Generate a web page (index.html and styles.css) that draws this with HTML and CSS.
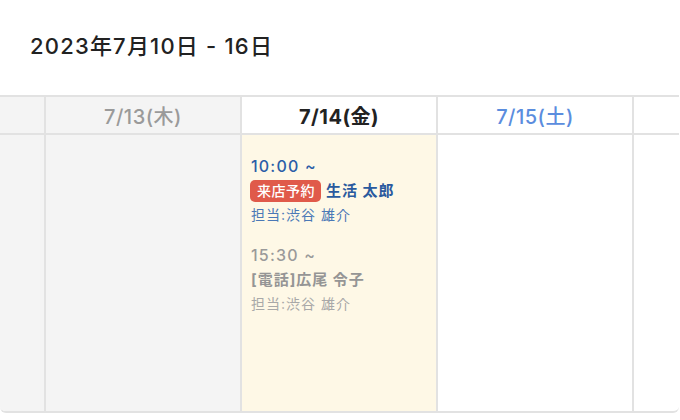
FILE: index.html
```html
<!DOCTYPE html>
<html lang="ja">
<head>
<meta charset="utf-8">
<link rel="stylesheet" href="styles.css">
</head>
<body>
<div class="page">
  <div class="title-bar"><h1 class="title">2023年7月10日 - 16日</h1></div>
  <div class="calendar">
    <div class="row head">
      <div class="cell time-col past"></div>
      <div class="cell day past">7/13(木)</div>
      <div class="cell day today">7/14(金)</div>
      <div class="cell day sat">7/15(土)</div>
      <div class="cell day sun"></div>
    </div>
    <div class="row body">
      <div class="cell time-col past"></div>
      <div class="cell day past"></div>
      <div class="cell day today">
        <div class="event active">
          <div class="ev-time">10:00 ~</div>
          <div class="ev-name"><span class="badge">来店予約</span>生活 太郎</div>
          <div class="ev-staff">担当:渋谷 雄介</div>
        </div>
        <div class="event done">
          <div class="ev-time">15:30 ~</div>
          <div class="ev-name">[電話]広尾 令子</div>
          <div class="ev-staff">担当:渋谷 雄介</div>
        </div>
      </div>
      <div class="cell day"></div>
      <div class="cell day"></div>
    </div>
  </div>
</div>
</body>
</html>
```

FILE: styles.css
```css
html, body {
  margin: 0;
  padding: 0;
  background: #ffffff;
}
body {
  font-family: "Inter", "Noto Sans CJK JP", sans-serif;
  color: #222222;
  width: 680px;
  height: 420px;
  overflow: hidden;
}
.page {
  width: 680px;
}
.title-bar {
  height: 95px;
  display: flex;
  align-items: center;
  padding-left: 30px;
  box-sizing: border-box;
  padding-bottom: 8px;
}
.title {
  margin: 0;
  font-size: 22px;
  font-weight: 500;
  color: #222222;
  letter-spacing: 1.2px;
}
.calendar {
  width: 679px;
  overflow: hidden;
  border-top: 2px solid #e2e2e2;
  border-bottom: 2px solid #e2e2e2;
  border-radius: 0 0 6px 6px;
}
.row {
  display: grid;
  grid-template-columns: 44px 196px 196px 196px 196px;
}
.row.head {
  height: 36px;
  border-bottom: 2px solid #e2e2e2;
}
.row.body {
  height: 276px;
}
.cell {
  box-sizing: border-box;
}
.day {
  border-left: 2px solid #e2e2e2;
}
.past {
  background: #f4f4f4;
}
.row.body .today {
  background: #fef8e6;
}
.head .day {
  display: flex;
  align-items: center;
  justify-content: center;
  font-size: 20px;
  font-weight: 500;
  letter-spacing: 0.5px;
  padding-top: 1px;
}
.head .past {
  color: #9a9a9a;
}
.head .today {
  color: #222222;
  font-weight: 700;
}
.head .sat {
  color: #5b8dde;
}
.row.body .today {
  padding: 19px 8px 0 9px;
}
.event {
  margin-bottom: 16px;
}
.ev-time {
  font-size: 16px;
  line-height: 24px;
  font-weight: 500;
  letter-spacing: 1.2px;
}
.ev-name {
  font-size: 15px;
  line-height: 25px;
  font-weight: 700;
  letter-spacing: 1px;
  display: flex;
  align-items: center;
}
.ev-staff {
  font-size: 14px;
  line-height: 24px;
  letter-spacing: 1px;
}
.badge {
  display: inline-block;
  background: #e05a4a;
  color: #ffffff;
  font-size: 14px;
  font-weight: 500;
  letter-spacing: 0.5px;
  line-height: 22px;
  height: 22px;
  padding: 0 6px 0 7px;
  border-radius: 5px;
  margin-left: -1px;
  margin-right: 5px;
}
.active .ev-time { color: #2b5ea8; }
.active .ev-name { color: #2a5a9e; }
.active .ev-staff { color: #4a78b6; }
.done .ev-time { color: #9a9a9a; }
.done .ev-name { color: #959595; }
.done .ev-staff { color: #a8a8a8; }
```
